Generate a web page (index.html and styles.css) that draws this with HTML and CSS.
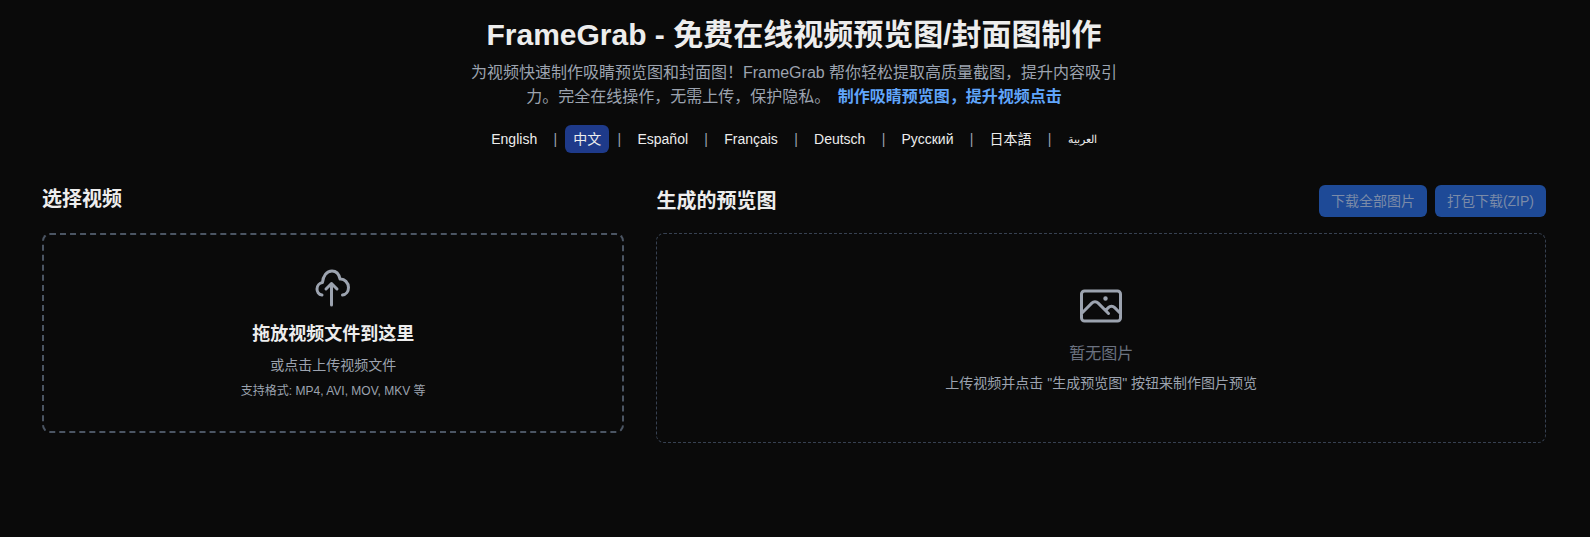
FILE: index.html
```html
<!DOCTYPE html>
<html lang="zh-CN">
<head>
<meta charset="utf-8">
<title>FrameGrab</title>
<link rel="stylesheet" href="styles.css">
</head>
<body>
<div class="container">
  <header class="hero">
    <h1 class="title">FrameGrab - 免费在线视频预览图/封面图制作</h1>
    <p class="subtitle">为视频快速制作吸睛预览图和封面图！FrameGrab 帮你轻松提取高质量截图，提升内容吸引力。完全在线操作，无需上传，保护隐私。 <strong class="accent">制作吸睛预览图，提升视频点击</strong></p>
    <nav class="langs">
      <a class="lang">English</a><span class="sep">|</span>
      <a class="lang active">中文</a><span class="sep">|</span>
      <a class="lang">Español</a><span class="sep">|</span>
      <a class="lang">Français</a><span class="sep">|</span>
      <a class="lang">Deutsch</a><span class="sep">|</span>
      <a class="lang">Русский</a><span class="sep">|</span>
      <a class="lang">日本語</a><span class="sep">|</span>
      <a class="lang lang-ar">العربية</a>
    </nav>
  </header>
  <main class="grid">
    <section class="left">
      <h2 class="heading left-heading">选择视频</h2>
      <div class="dropzone">
        <svg class="icon-upload" viewBox="0 0 48 48" fill="none" stroke="currentColor" stroke-width="3" stroke-linecap="round" stroke-linejoin="round"><path d="M13 33C9.5 32.5 8 29.5 8 27C8 23.5 10.5 21 13.5 20.5C14 14 17.5 9 23 9C27.5 9 30 12 31 17C35.5 16.5 39.5 21 39.5 25.5C39.5 29.5 37 32.5 33.5 33"/><path d="M22.5 43V22"/><path d="M17 27L22.5 21.5L28 27"/></svg>
        <p class="drop-title">拖放视频文件到这里</p>
        <p class="drop-sub">或点击上传视频文件</p>
        <p class="drop-note">支持格式: MP4, AVI, MOV, MKV 等</p>
      </div>
    </section>
    <section class="right">
      <div class="right-head">
        <h2 class="heading">生成的预览图</h2>
        <div class="actions">
          <button class="btn">下载全部图片</button>
          <button class="btn">打包下载(ZIP)</button>
        </div>
      </div>
      <div class="empty">
        <svg class="icon-photo" viewBox="0 0 24 24" fill="none" stroke="currentColor" stroke-width="1.5" stroke-linecap="round" stroke-linejoin="round"><path d="m2.25 15.75 5.159-5.159a2.25 2.25 0 0 1 3.182 0l5.159 5.159m-1.5-1.5 1.409-1.409a2.25 2.25 0 0 1 3.182 0l2.909 2.909m-18 3.75h16.5a1.5 1.5 0 0 0 1.5-1.5V6a1.5 1.5 0 0 0-1.5-1.5H3.75A1.5 1.5 0 0 0 2.25 6v12a1.5 1.5 0 0 0 1.5 1.5Zm10.5-11.25h.008v.008h-.008V8.25Zm.375 0a.375.375 0 1 1-.75 0 .375.375 0 0 1 .75 0Z"/></svg>
        <p class="empty-title">暂无图片</p>
        <p class="empty-sub">上传视频并点击 "生成预览图" 按钮来制作图片预览</p>
      </div>
    </section>
  </main>
</div>
</body>
</html>
```

FILE: styles.css
```css
* { box-sizing: border-box; }
html, body { margin: 0; padding: 0; }
body {
  background: #0a0a0a;
  color: #ededed;
  font-family: "Liberation Sans", "Noto Sans CJK SC", sans-serif;
  min-height: 537px;
  padding-right: 2px;
  overflow: hidden;
}
p, h1, h2 { margin: 0; }
.container { max-width: 1536px; margin: 0 auto; padding: 17px 16px 0; }
.hero { display: flex; flex-direction: column; align-items: center; text-align: center; }
.title { font-size: 30px; line-height: 36px; font-weight: 700; color: #ededed; }
.subtitle { max-width: 672px; margin-top: 8px; font-size: 16px; line-height: 24px; color: #9ca3af; }
.accent { margin-left: 3px; font-weight: 600; color: #60a5fa; }
.langs { display: flex; align-items: center; gap: 8px; margin-top: 16px; font-size: 14px; line-height: 20px; height: 28px; }
.lang { padding: 4px 8px; border-radius: 6px; color: #ededed; }
.lang.active { background: #1e3a8a; }
.lang-ar { font-size: 10.5px; }
.sep { width: 4.15px; color: #9ca3af; }
.grid { display: grid; grid-template-columns: repeat(5, 1fr); gap: 32px; margin-top: 32px; }
.left { grid-column: span 2; }
.right { grid-column: span 3; }
.heading { font-size: 20px; line-height: 28px; font-weight: 600; color: #ededed; }
.left-heading { margin-bottom: 20px; }
.right-head { display: flex; justify-content: space-between; align-items: center; height: 32px; margin-bottom: 16px; }
.actions { display: flex; gap: 8px; }
.btn { height: 32px; padding: 0 12px; border: 0; border-radius: 6px; background: #1e4a97; color: #7b8ba8; font: 14px/20px "Liberation Sans", "Noto Sans CJK SC", sans-serif; }
.dropzone { height: 200px; border: 2px dashed #4b5563; border-radius: 8px; display: flex; flex-direction: column; align-items: center; padding-top: 27px; }
.icon-upload { width: 48px; height: 48px; color: #9ca3af; }
.drop-title { margin-top: 10px; font-size: 18px; line-height: 28px; font-weight: 600; color: #ededed; }
.drop-sub { margin-top: 7px; font-size: 14px; line-height: 20px; color: #9ca3af; }
.drop-note { margin-top: 8px; font-size: 12px; line-height: 16px; color: #9ca3af; }
.empty { height: 210px; border: 1px dashed #374151; border-radius: 8px; display: flex; flex-direction: column; align-items: center; padding-top: 48px; }
.icon-photo { width: 48px; height: 48px; color: #9ca3af; }
.empty-title { margin-top: 12px; font-size: 16px; line-height: 24px; color: #6b7280; }
.empty-sub { margin-top: 7px; font-size: 14px; line-height: 20px; color: #9ca3af; }
```
